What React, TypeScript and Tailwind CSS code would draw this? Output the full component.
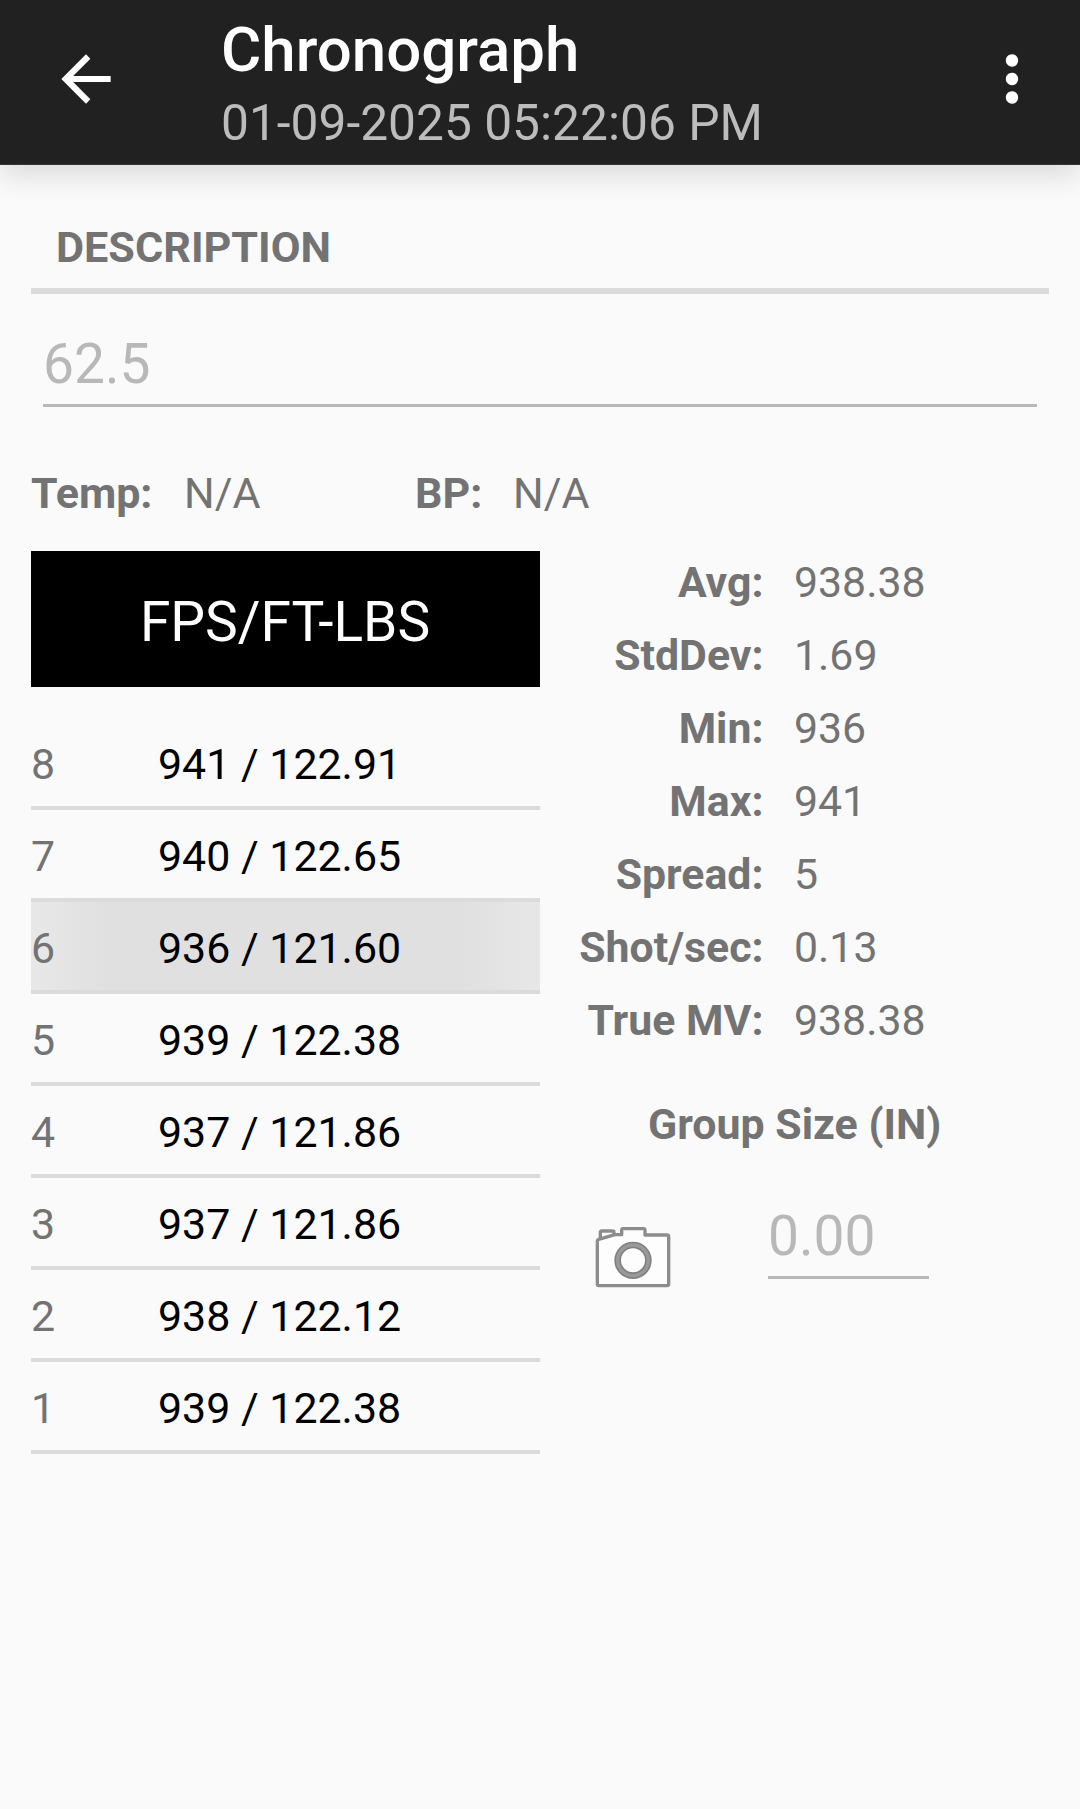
import { clsx } from "clsx";

const shots = [
  { id: 8, value: "941 / 122.91" },
  { id: 7, value: "940 / 122.65" },
  { id: 6, value: "936 / 121.60", pressed: true },
  { id: 5, value: "939 / 122.38" },
  { id: 4, value: "937 / 121.86" },
  { id: 3, value: "937 / 121.86" },
  { id: 2, value: "938 / 122.12" },
  { id: 1, value: "939 / 122.38" },
];

const stats = [
  { label: "Avg:", value: "938.38" },
  { label: "StdDev:", value: "1.69" },
  { label: "Min:", value: "936" },
  { label: "Max:", value: "941" },
  { label: "Spread:", value: "5" },
  { label: "Shot/sec:", value: "0.13" },
  { label: "True MV:", value: "938.38" },
];

function AppBar() {
  return (
    <header className="flex h-[165px] border-b border-[#383435] bg-[#212121] shadow-[0_10px_28px_rgba(0,0,0,0.13)]">
      <button className="mt-[42px] ml-[49px] h-[74px] w-[74px]">
        <svg viewBox="0 0 24 24" className="h-[74px] w-[74px]" fill="#fff">
          <path d="M20 11H7.83l5.59-5.59L12 4l-8 8 8 8 1.41-1.41L7.83 13H20v-2z" />
        </svg>
      </button>
      <div className="ml-[98px] flex-1">
        <h1 className="mt-[15px] text-[61.8px] leading-[70px] font-medium text-white">Chronograph</h1>
        <p className="mt-[10px] text-[49.7px] leading-[56px] text-[#bcbcbc]">01-09-2025 05:22:06 PM</p>
      </div>
      <button className="mt-[42px] mr-[31px] h-[74px] w-[74px]">
        <svg viewBox="0 0 24 24" className="h-[74px] w-[74px]" fill="#fff">
          <path d="M12 8c1.1 0 2-.9 2-2s-.9-2-2-2-2 .9-2 2 .9 2 2 2zm0 2c-1.1 0-2 .9-2 2s.9 2 2 2 2-.9 2-2-.9-2-2-2zm0 6c-1.1 0-2 .9-2 2s.9 2 2 2 2-.9 2-2-.9-2-2-2z" />
        </svg>
      </button>
    </header>
  );
}

function ShotTable() {
  return (
    <div className="w-[509px]">
      <div className="flex h-[136px] items-center justify-center bg-black pt-[6px] pr-[1px] text-[55.1px] text-white">
        FPS/FT-LBS
      </div>
      <ul className="mt-[31px]">
        {shots.map((shot) => (
          <li
            key={shot.id}
            className={clsx(
              "flex h-[92px] items-center border-b-4 border-[#dbdbdb] pt-[4px] text-[42.9px]",
              shot.pressed && "bg-[linear-gradient(to_right,#e8e8e8,#e0e0e0_15%,#e0e0e0_84%,#e7e7e7)]"
            )}
          >
            <span className="w-[127px]">{shot.id}</span>
            <span className="text-black">{shot.value}</span>
          </li>
        ))}
      </ul>
    </div>
  );
}

function CameraIcon() {
  return (
    <svg viewBox="0 0 228 186" className="h-[62px] w-[76px]" fill="#fdfdfd" stroke="#8c8c8c" strokeWidth="10" strokeLinejoin="round">
      <path d="M16 42V20q0-5 5-5h31q5 0 5 5v12" />
      <path d="M11 40L60 26H80V13q0-5 5-5h60q5 0 5 5v14h66q5 0 5 5v142q0 5-5 5H12q-5 0-5-5V46q0-4 4-6z" />
      <circle cx="114" cy="103" r="46" stroke="#808080" strokeWidth="20" />
      <circle cx="114" cy="103" r="46" fill="none" stroke="#999" strokeWidth="10" />
    </svg>
  );
}

export default function App() {
  return (
    <div className="h-[1809px] w-[1080px] overflow-hidden bg-[#fafafa] font-[Roboto,sans-serif] text-[#737373]">
      <AppBar />
      <main className="px-[31px]">
        <h2 className="mt-[51px] pl-[25px] text-[43.2px] leading-[64px] font-bold">DESCRIPTION</h2>
        <div className="mt-[8px] h-[6px] bg-[#dbdbdb]" />
        <div className="mx-[12px] mt-[32px] h-[81px] border-b-[3px] border-[#b8b8b8] text-[55.1px] leading-[76px] text-[#b8b8b8]">
          62.5
        </div>
        <div className="mt-[62px] flex h-[49px] text-[43px] leading-[49px]">
          <span className="w-[153px] font-bold">Temp:</span>
          <span className="w-[231px]">N/A</span>
          <span className="w-[98px] font-bold">BP:</span>
          <span>N/A</span>
        </div>
        <div className="mt-[33px] flex">
          <ShotTable />
          <div className="flex-1">
            <dl className="mt-[7px] text-[42.8px] leading-[49px]">
              {stats.map((stat) => (
                <div key={stat.label} className="mb-[24px] flex">
                  <dt className="w-[223.5px] text-right font-bold">{stat.label}</dt>
                  <dd className="ml-[30.5px]">{stat.value}</dd>
                </div>
              ))}
            </dl>
            <h3 className="mt-[55px] pl-[108px] text-[42.9px] leading-[49px] font-bold">Group Size (IN)</h3>
            <div className="mt-[49px] flex">
              <div className="mt-[28px] ml-[55px]">
                <CameraIcon />
              </div>
              <div className="ml-[97px] h-[81px] w-[161px] border-b-[3px] border-[#b8b8b8] text-[55.1px] leading-[76px] text-[#b8b8b8]">
                0.00
              </div>
            </div>
          </div>
        </div>
      </main>
    </div>
  );
}
